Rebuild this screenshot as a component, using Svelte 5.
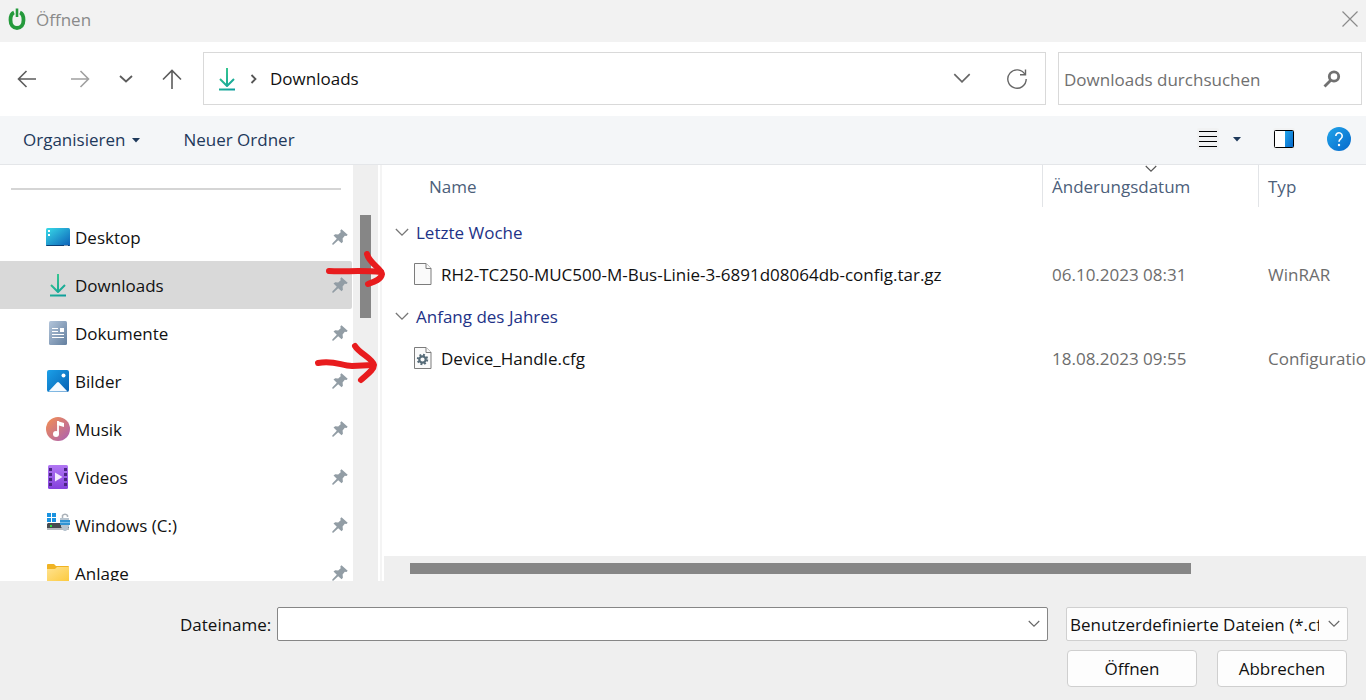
<script>
  const places = [
    { id: 'desktop', label: 'Desktop' },
    { id: 'downloads', label: 'Downloads', active: true },
    { id: 'documents', label: 'Dokumente' },
    { id: 'pictures', label: 'Bilder' },
    { id: 'music', label: 'Musik' },
    { id: 'videos', label: 'Videos' },
    { id: 'drive', label: 'Windows (C:)' },
    { id: 'folder', label: 'Anlage' }
  ];

  const groups = [
    {
      title: 'Letzte Woche',
      files: [
        {
          icon: 'blank',
          name: 'RH2-TC250-MUC500-M-Bus-Linie-3-6891d08064db-config.tar.gz',
          date: '06.10.2023 08:31',
          type: 'WinRAR'
        }
      ]
    },
    {
      title: 'Anfang des Jahres',
      files: [
        { icon: 'config', name: 'Device_Handle.cfg', date: '18.08.2023 09:55', type: 'Configuration' }
      ]
    }
  ];

  let fileName = $state('');
</script>

{#snippet download()}
  <svg width="24" height="24" viewBox="0 0 24 24" fill="none" stroke="url(#g-down)" stroke-width="2">
    <path d="M12 1v18M5 12l7 7 7-7" stroke-linejoin="round" />
    <path d="M4 22.5h16" />
  </svg>
{/snippet}

{#snippet chevron(w, color)}
  <svg width={w} height={w / 2 + 2} viewBox="0 0 16 10" fill="none" stroke={color} stroke-width="1.5">
    <path d="M1 1l7 7 7-7" />
  </svg>
{/snippet}

{#snippet caret()}
  <svg width="8" height="5" viewBox="0 0 8 5"><path d="M0 0h8L4 4.500z" fill="#1e395b" /></svg>
{/snippet}

{#snippet placeIcon(id)}
  {#if id === 'downloads'}
    {@render download()}
  {:else}
    <svg width="24" height="24" viewBox="0 0 24 24">
      {#if id === 'desktop'}
        <rect y="3" width="24" height="18" rx="1.500" fill="url(#g-desk)" />
        <path d="M0 20h24a1 1 0 0 1-1 1H1a1 1 0 0 1-1-1z" fill="#0b3f75" />
        <path d="M2 5h2v2H2zM2 9h2v2H2z" fill="#fff" />
        <path d="M18.500 20h1v1h-1zM20.500 20h1v1h-1z" fill="#fff" />
      {:else if id === 'documents'}
        <rect x="3" width="18" height="24" rx="1.500" fill="url(#g-doc)" />
        <path d="M6 7.500h6M6 10.500h6M6 13.500h12M6 16.500h12" stroke="#fff" stroke-width="1.200" />
        <path d="M14 7h4v4h-4z" fill="#fff" />
      {:else if id === 'pictures'}
        <rect x="1" y="1" width="22" height="22" rx="2" fill="url(#g-pic)" />
        <path d="M2.500 22.500l8.500-9q1-1 2 0l8.500 9z" fill="#f4faff" />
        <circle cx="17.500" cy="6.500" r="2" fill="#fff" />
      {:else if id === 'music'}
        <circle cx="12" cy="12" r="12" fill="url(#g-mus)" />
        <path d="M12 4v13" stroke="#fff" stroke-width="1.800" />
        <path d="M11.100 4l6.900 2v4l-6.900-2z" fill="#fff" />
        <circle cx="10" cy="17" r="3" fill="#fff" />
      {:else if id === 'videos'}
        <rect x="2" width="20" height="24" rx="1.500" fill="url(#g-vid)" />
        <path
          d="M3 3h3v3H3zM3 8h3v3H3zM3 13h3v3H3zM3 18h3v3H3zM18 3h3v3h-3zM18 8h3v3h-3zM18 13h3v3h-3zM18 18h3v3h-3z"
          fill="#4a2583"
        />
        <path d="M9 7.500v9l7.500-4.500z" fill="#f3eafd" />
      {:else if id === 'drive'}
        <path d="M1 0h4v4H1zM6 0h4v4H6zM1 5h4v4H1zM6 5h4v4H6z" fill="#1a93e0" />
        <path d="M2 10h20l1 1v6H1v-6z" fill="#474b50" />
        <path d="M1 15h22v2H1z" fill="#b9bdc1" />
        <path d="M4 12h2v2H4z" fill="#2fe03c" />
        <path d="M16.500 6V2.500a3 3 0 0 1 5 0V4" fill="none" stroke="#aab1b8" stroke-width="1.500" />
        <path d="M14 5h9v3h-9z" fill="#b7c4cf" />
        <path d="M14 7h10v5H14z" fill="#3294d3" />
        <path d="M15 12h8v2l-2.500 2.500v1.500h-3v-1.500L15 14z" fill="#b7c4cf" />
        <path d="M14 9.500h10" stroke="#78bce8" stroke-width="1" />
      {:else}
        <path d="M1 4a1 1 0 0 1 1-1h6l2 2h12a1 1 0 0 1 1 1v4H1z" fill="#f0b323" />
        <path d="M1 8h8l2-2h12v14a1 1 0 0 1-1 1H2a1 1 0 0 1-1-1z" fill="url(#g-fold)" />
      {/if}
    </svg>
  {/if}
{/snippet}

<svg class="defs" width="0" height="0" aria-hidden="true">
  <defs>
    <linearGradient id="g-down" gradientUnits="userSpaceOnUse" x1="4" y1="1" x2="20" y2="23">
      <stop offset="0" stop-color="#3fce8d" /><stop offset="1" stop-color="#0a9c9c" />
    </linearGradient>
    <linearGradient id="g-desk" x1="0" y1="0" x2="1" y2="1">
      <stop offset="0" stop-color="#38dbe8" /><stop offset="1" stop-color="#0c5fb8" />
    </linearGradient>
    <linearGradient id="g-doc" x1="0" y1="0" x2="1" y2="1">
      <stop offset="0" stop-color="#b3c5da" /><stop offset="1" stop-color="#637f9f" />
    </linearGradient>
    <linearGradient id="g-pic" x1="0" y1="0" x2="1" y2="1">
      <stop offset="0" stop-color="#1ba0e8" /><stop offset="1" stop-color="#0560b2" />
    </linearGradient>
    <linearGradient id="g-mus" x1="0" y1="0" x2="1" y2="1">
      <stop offset="0" stop-color="#f5904f" /><stop offset="1" stop-color="#a95fb5" />
    </linearGradient>
    <linearGradient id="g-vid" x1="0" y1="0" x2="0" y2="1">
      <stop offset="0" stop-color="#b177f3" /><stop offset="1" stop-color="#8440dd" />
    </linearGradient>
    <linearGradient id="g-fold" x1="0" y1="0" x2="1" y2="1">
      <stop offset="0" stop-color="#ffe391" /><stop offset="1" stop-color="#fcc93c" />
    </linearGradient>
    <linearGradient id="g-help" x1="0" y1="0" x2="1" y2="1">
      <stop offset="0" stop-color="#22a5ea" /><stop offset="1" stop-color="#0568cb" />
    </linearGradient>
  </defs>
</svg>

<div class="dialog">
  <header class="title">
    <svg width="18" height="24" viewBox="0 0 18 24" fill="none" stroke="#259a3c">
      <path d="M6 4.500C3.500 5.500 2.500 8 2.500 12c0 5 2.500 8 6.500 8s6.500-3 6.500-8c0-4-1-6.500-3.500-7.500" stroke-width="3.800" />
      <path d="M9 .5v8.500" stroke-width="2.600" />
    </svg>
    <h1>Öffnen</h1>
    <button class="close" aria-label="Schließen">
      <svg width="16" height="16" viewBox="0 0 16 16" stroke="#8b8b8b" stroke-width="1.200"><path d="M.5.5l15 15M15.500.5l-15 15" /></svg>
    </button>
  </header>

  <nav class="navbar">
    <div class="history">
      <button aria-label="Zurück">
        <svg width="20" height="18" viewBox="0 0 20 18" fill="none" stroke="#5c5c5c" stroke-width="1.600"><path d="M19 9H2M9.500 1L1.500 9l8 8" /></svg>
      </button>
      <button aria-label="Vorwärts">
        <svg width="20" height="18" viewBox="0 0 20 18" fill="none" stroke="#a0a0a0" stroke-width="1.600"><path d="M1 9h17M10.500 1l8 8-8 8" /></svg>
      </button>
      <button aria-label="Verlauf">
        <svg width="14" height="8" viewBox="0 0 14 8" fill="none" stroke="#5c5c5c" stroke-width="1.800"><path d="M1 1l6 5.500L13 1" /></svg>
      </button>
      <button aria-label="Nach oben">
        <svg width="20" height="20" viewBox="0 0 20 20" fill="none" stroke="#5c5c5c" stroke-width="1.600"><path d="M10 20V1.500M1 10.500l9-9 9 9" /></svg>
      </button>
    </div>
    <div class="address">
      {@render download()}
      <svg width="8" height="10" viewBox="0 0 8 10" fill="none" stroke="#555" stroke-width="1.800"><path d="M1.500 1l4 4-4 4" /></svg>
      <a href="#downloads">Downloads</a>
      <button class="push" aria-label="Vorherige Orte">{@render chevron(18, '#666')}</button>
      <button aria-label="Aktualisieren">
        <svg width="22" height="22" viewBox="0 0 22 22" fill="none" stroke="#666" stroke-width="1.400">
          <path d="M19 6.500A9.200 9.200 0 1 0 20.200 11" />
          <path d="M19.500 1.500v5.200h-5.500" />
        </svg>
      </button>
    </div>
    <label class="search">
      <input type="search" placeholder="Downloads durchsuchen" aria-label="Downloads durchsuchen" />
      <svg width="18" height="18" viewBox="0 0 18 18" fill="none" stroke="#707070">
        <circle cx="11" cy="6.500" r="4.700" stroke-width="2.800" />
        <path d="M7.500 10.500L1.500 16.500" stroke-width="2.800" />
      </svg>
    </label>
  </nav>

  <div class="toolbar">
    <button>Organisieren {@render caret()}</button>
    <button>Neuer Ordner</button>
    <div class="tools">
      <button aria-label="Ansicht ändern">
        <svg width="22" height="22" viewBox="0 0 22 22">
          <rect width="22" height="22" rx="2" fill="#f1f2f3" />
          <path d="M2 3.500h18M2 8.500h18M2 13.500h18M2 18.500h18" stroke="#000" stroke-width="1" />
        </svg>
        {@render caret()}
      </button>
      <button aria-label="Vorschaufenster">
        <svg width="22" height="22" viewBox="0 0 22 22">
          <rect width="22" height="22" rx="2" fill="#f1f2f3" />
          <rect x="1.500" y="2.500" width="19" height="17" rx="1" fill="#fff" stroke="#000" />
          <path d="M12 3h8v16h-8z" fill="url(#g-help)" />
        </svg>
      </button>
      <button aria-label="Hilfe">
        <svg width="24" height="24" viewBox="0 0 24 24" fill="none">
          <circle cx="12" cy="12" r="12" fill="url(#g-help)" />
          <path d="M8.800 9a3.200 3.200 0 1 1 5.200 2.500c-1.300 1-2 1.500-2 3.300" stroke="#fff" stroke-width="1.600" />
          <circle cx="12" cy="18" r="1.200" fill="#fff" />
        </svg>
      </button>
    </div>
  </div>

  <main class="content">
    <aside class="places">
      <hr />
      <ul>
        {#each places as place}
          <li>
            <a href="#{place.id}" class:active={place.active}>
              {@render placeIcon(place.id)}
              <span class="text">{place.label}</span>
              <svg class="pin" width="16" height="16" viewBox="0 0 16 16" fill="#929da5">
                <path d="M9.500 0.300L15.700 5.800 14.500 7 12.800 6.800 10.600 9.600 10.900 12.800 9.600 14.300 6.200 11.200 1.300 15.700 0.200 15.600 0.300 14.500 4.800 9.700 1.500 6.400 3.200 5.200 6.200 5.500 8.700 3.300 8.300 1.500z" />
              </svg>
            </a>
          </li>
        {/each}
      </ul>
    </aside>
    <div class="vscroll"><div class="vthumb"></div></div>
    <div class="splitter"></div>

    <section class="files">
      <div class="listing">
        <table>
          <colgroup><col /><col class="c-date" /><col class="c-type" /></colgroup>
          <thead>
            <tr>
              <th class="name"><div>Name</div></th>
              <th>
                <div>Änderungsdatum <span class="sort">{@render chevron(12, '#555')}</span></div>
              </th>
              <th><div>Typ</div></th>
            </tr>
          </thead>
          {#each groups as group}
            <tbody>
              <tr class="group">
                <th colspan="3">
                  <button>{@render chevron(14, '#777')}<span class="text">{group.title}</span></button>
                </th>
              </tr>
              {#each group.files as file}
                <tr class="file">
                  <td>
                    <div class="entry">
                      <svg width="18" height="24" viewBox="0 0 18 24" fill="#fafafa" stroke="#7c7c7c" stroke-width="1">
                        <path d="M.5 1.500h11.500l5 5v16H.5z" />
                        <path d="M12 1.500v5h5" />
                        {#if file.icon === 'config'}
                          <circle cx="8.500" cy="13.500" r="4.700" fill="none" stroke="#566b78" stroke-width="2" stroke-dasharray="1.850 1.840" />
                          <circle cx="8.500" cy="13.500" r="3.200" fill="none" stroke="#566b78" stroke-width="2.200" />
                        {/if}
                      </svg>
                      <span class="text">{file.name}</span>
                    </div>
                  </td>
                  <td><div class="text">{file.date}</div></td>
                  <td><div class="text">{file.type}</div></td>
                </tr>
              {/each}
            </tbody>
          {/each}
        </table>
      </div>
      <div class="hscroll"><div class="hthumb"></div></div>
    </section>
  </main>

  <footer class="footer">
    <div class="row">
      <label class="text" for="filename">Dateiname:</label>
      <div class="combo">
        <input id="filename" type="text" bind:value={fileName} />
        <button aria-label="Zuletzt verwendet">{@render chevron(12, '#666')}</button>
      </div>
      <div class="filter">
        <select aria-label="Dateityp">
          <option>Benutzerdefinierte Dateien (*.cfg)</option>
        </select>
        <span>{@render chevron(12, '#666')}</span>
      </div>
    </div>
    <div class="actions">
      <button>Öffnen</button>
      <button>Abbrechen</button>
    </div>
  </footer>

  <svg class="marks" width="400" height="400" viewBox="0 0 400 400" fill="none" stroke="#e81c1e" stroke-width="6" stroke-linecap="round" stroke-linejoin="round" aria-hidden="true">
    <path d="M329 271C345 272 360 270 381 272" />
    <path d="M367 254C369 263 382 269 382 274C381 280 374 282 368 284" />
    <path d="M318 363C335 360 341 366 352 366L373 365" />
    <path d="M355 346C359 353 373 359 374 365C374 370 366 375 361 380" />
  </svg>
</div>

<style>
  :global(body) {
    margin: 0;
  }
  .dialog {
    position: relative;
    display: flex;
    flex-direction: column;
    height: 100vh;
    overflow: hidden;
    background: #fff;
    color: #111;
    font: 17px/24px 'Open Sans', 'Noto Sans', sans-serif;
  }
  .dialog * {
    box-sizing: border-box;
  }
  .defs {
    position: absolute;
  }
  svg {
    flex: none;
    display: block;
  }
  button,
  input,
  select {
    font: inherit;
    color: inherit;
    margin: 0;
    padding: 0;
    border: 0;
    background: none;
    outline: 0;
  }
  button {
    display: flex;
    align-items: center;
    justify-content: center;
  }
  a {
    color: inherit;
    text-decoration: none;
  }
  .text {
    padding-top: 2px;
  }

  .title {
    display: flex;
    align-items: center;
    height: 42px;
    flex: none;
    padding: 0 8px;
    background: #f2f2f2;
    color: #8a8a8a;
  }
  h1 {
    margin: 0 0 2px 10px;
    font-size: 17px;
    font-weight: 400;
  }
  .title > svg {
    margin-bottom: 2px;
  }
  .close {
    margin: 0 0 4px auto;
  }

  .navbar {
    display: flex;
    height: 74px;
    flex: none;
    padding: 10px 4px 11px 17px;
  }
  .history {
    display: flex;
    align-items: center;
    gap: 33px;
    width: 186px;
    flex: none;
  }
  .history button:nth-child(3) {
    margin-right: -4px;
    margin-left: -4px;
  }
  .address {
    display: flex;
    align-items: center;
    flex: 1;
    border: 1px solid #d9d9d9;
    padding: 0 17px 0 11px;
  }
  .address a {
    margin-left: 12px;
  }
  .address > svg:nth-of-type(2) {
    margin-left: 11px;
  }
  .push {
    margin: 0 35px 0 auto;
  }
  .search {
    display: flex;
    align-items: center;
    width: 304px;
    flex: none;
    margin-left: 12px;
    padding: 0 20px 0 5px;
    border: 1px solid #d9d9d9;
  }
  .search input {
    flex: 1;
    min-width: 0;
    padding-top: 2px;
  }
  .search input::placeholder {
    color: #707070;
    opacity: 1;
  }

  .toolbar {
    display: flex;
    align-items: center;
    gap: 43px;
    height: 49px;
    flex: none;
    padding: 0 15px 0 23px;
    border-bottom: 1px solid #e4e6e9;
    background: #f4f6f8;
    color: #1e395b;
  }
  .toolbar button {
    gap: 7px;
  }
  .tools {
    display: flex;
    align-items: center;
    gap: 32px;
    margin: 0 0 2px auto;
  }
  .tools button:first-child {
    gap: 14px;
  }

  .content {
    display: flex;
    flex: 1;
    min-height: 0;
  }
  .places {
    width: 353px;
    flex: none;
    overflow: hidden;
  }
  hr {
    height: 2px;
    margin: 23px 12px 23px 11px;
    border: 0;
    background: #d5d5d5;
  }
  ul {
    margin: 0;
    padding: 0;
    list-style: none;
  }
  li a {
    display: flex;
    align-items: center;
    gap: 5px;
    height: 48px;
    margin-right: 1px;
    padding: 0 4px 0 46px;
    border-radius: 0 2px 2px 0;
  }
  .active {
    background: #d9d9d9;
  }
  .pin {
    margin-left: auto;
  }
  .vscroll {
    width: 25px;
    flex: none;
    padding: 50px 7px 0;
    background: #efefef;
  }
  .vthumb {
    height: 103px;
    background: #868686;
  }
  .splitter {
    width: 6px;
    flex: none;
    border: solid #fff;
    border-width: 0 2px;
    background: #f4f4f4;
  }
  .files {
    display: flex;
    flex-direction: column;
    flex: 1;
    min-width: 0;
  }
  .listing {
    flex: 1;
    min-height: 0;
    overflow: hidden;
  }
  table {
    width: 100%;
    table-layout: fixed;
    border-collapse: collapse;
  }
  .c-date {
    width: 216px;
  }
  .c-type {
    width: 108px;
  }
  th,
  td {
    padding: 0;
    font-weight: 400;
    text-align: left;
    white-space: nowrap;
  }
  thead th {
    padding-bottom: 7px;
    color: #4c607a;
  }
  thead div {
    position: relative;
    height: 42px;
    padding: 10px 9px 8px;
    border-left: 1px solid #e2e4e7;
  }
  thead .name div {
    padding-left: 45px;
    border: 0;
  }
  .sort {
    position: absolute;
    top: 0;
    left: 50%;
    transform: translateX(-50%);
  }
  .group {
    height: 36px;
    color: #1e3287;
  }
  .group button {
    gap: 7px;
    margin-left: 11px;
  }
  .file {
    height: 48px;
  }
  .file td {
    padding-left: 10px;
    color: #6d6d6d;
  }
  .file td:first-child {
    padding-left: 30px;
    color: #111;
  }
  .entry {
    display: flex;
    align-items: center;
    gap: 9px;
  }
  .hscroll {
    height: 25px;
    flex: none;
    padding: 7px 26px;
    background: #efefef;
  }
  .hthumb {
    width: 84%;
    height: 11px;
    background: #868686;
  }

  .footer {
    flex: none;
    padding: 26px 18px 13px 180px;
    background: #efefef;
  }
  .row {
    display: flex;
    align-items: center;
  }
  .row label {
    width: 97px;
    flex: none;
  }
  .combo {
    display: flex;
    flex: 1;
    height: 34px;
    margin-right: 18px;
    border: 1px solid #868686;
    border-radius: 2px;
    background: #fff;
  }
  .combo input {
    flex: 1;
    min-width: 0;
    padding: 0 4px;
  }
  .combo button {
    width: 26px;
  }
  .filter {
    position: relative;
    width: 282px;
    flex: none;
  }
  .filter select {
    appearance: none;
    width: 100%;
    height: 34px;
    padding: 2px 28px 0 3px;
    border: 1px solid #d0d0d0;
    border-radius: 2px;
    background: #fdfdfd;
  }
  .filter span {
    position: absolute;
    right: 8px;
    top: 13px;
    pointer-events: none;
  }
  .actions {
    display: flex;
    justify-content: flex-end;
    gap: 20px;
    padding: 9px 1px 0 0;
  }
  .actions button {
    width: 130px;
    height: 37px;
    padding-top: 1px;
    border: 1px solid #cfcfcf;
    border-radius: 4px;
    background: #fdfdfd;
  }
  .marks {
    position: absolute;
    top: 0;
    left: 0;
    pointer-events: none;
  }
</style>
